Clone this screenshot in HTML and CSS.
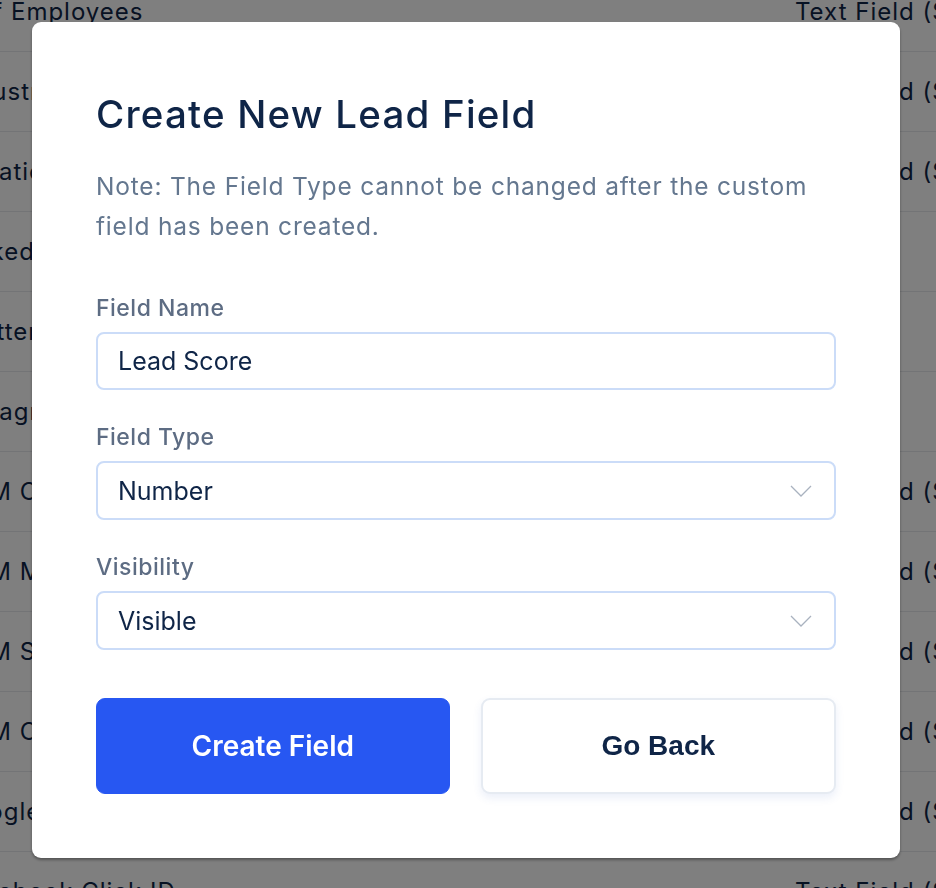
FILE: index.html
```html
<!DOCTYPE html>
<html>
<head>
<meta charset="utf-8">
<link rel="stylesheet" href="styles.css">
</head>
<body>
<div class="table">
  <div class="row"><span class="name"># of Employees</span><span class="type">Text Field (Single line)</span></div>
  <div class="row"><span class="name">Industry</span><span class="type">Text Field (Single line)</span></div>
  <div class="row"><span class="name">Location</span><span class="type">Text Field (Single line)</span></div>
  <div class="row"><span class="name">LinkedIn URL</span><span class="type">URL</span></div>
  <div class="row"><span class="name">Twitter Handle</span><span class="type">URL</span></div>
  <div class="row"><span class="name">Instagram</span><span class="type">URL</span></div>
  <div class="row"><span class="name">UTM Campaign</span><span class="type">Text Field (Single line)</span></div>
  <div class="row"><span class="name">UTM Medium</span><span class="type">Text Field (Single line)</span></div>
  <div class="row"><span class="name">UTM Source</span><span class="type">Text Field (Single line)</span></div>
  <div class="row"><span class="name">UTM Content</span><span class="type">Text Field (Single line)</span></div>
  <div class="row"><span class="name">Google Click ID</span><span class="type">Text Field (Single line)</span></div>
  <div class="row"><span class="name">Facebook Click ID</span><span class="type">Text Field (Single line)</span></div>
</div>
<div class="overlay"></div>
<div class="modal">
  <h1 class="title">Create New Lead Field</h1>
  <p class="note">Note: The Field Type cannot be changed after the custom field has been created.</p>
  <div class="field">
    <label class="label">Field Name</label>
    <div class="input">Lead Score</div>
  </div>
  <div class="field">
    <label class="label">Field Type</label>
    <div class="input select">Number
      <svg class="chev" width="22" height="12" viewBox="0 0 22 12"><polyline points="1,1 11,11 21,1" fill="none" stroke="#a9b2bf" stroke-width="1.3"/></svg>
    </div>
  </div>
  <div class="field">
    <label class="label">Visibility</label>
    <div class="input select">Visible
      <svg class="chev" width="22" height="12" viewBox="0 0 22 12"><polyline points="1,1 11,11 21,1" fill="none" stroke="#a9b2bf" stroke-width="1.3"/></svg>
    </div>
  </div>
  <div class="actions">
    <button class="btn primary">Create Field</button>
    <button class="btn secondary">Go Back</button>
  </div>
</div>
</body>
</html>
```
FILE: styles.css
```css
html, body {
  margin: 0;
  padding: 0;
  height: 100%;
  overflow: hidden;
  background: #ffffff;
  font-family: Inter, "Noto Sans", sans-serif;
}
.table {
  margin-top: -28px;
  margin-left: -46px;
  width: 1100px;
}
.row {
  display: grid;
  grid-template-columns: 841px 1fr;
  align-items: center;
  height: 79px;
  border-bottom: 1px solid #e6e8ec;
  font-size: 24px;
  letter-spacing: 1px;
  color: #0f2547;
  white-space: nowrap;
}
.overlay {
  position: fixed;
  inset: 0;
  background: rgba(0, 0, 0, 0.5);
}
.modal {
  position: fixed;
  left: 32px;
  top: 22px;
  width: 868px;
  height: 836px;
  box-sizing: border-box;
  background: #ffffff;
  border-radius: 9px;
  box-shadow: 0 2px 3px rgba(0, 0, 0, 0.35);
  padding: 66px 64px 0 64px;
  display: flex;
  flex-direction: column;
}
.title {
  margin: 0;
  font-size: 38.5px;
  font-weight: 500;
  line-height: 52px;
  letter-spacing: 1.2px;
  color: #0f2547;
}
.note {
  margin: 26px 0 0 0;
  font-size: 24.5px;
  line-height: 40px;
  color: #64778f;
  letter-spacing: 0.8px;
}
.field {
  display: flex;
  flex-direction: column;
  margin-top: 47px;
}
.field + .field {
  margin-top: 32px;
}
.label {
  font-size: 23px;
  line-height: 30px;
  color: #5d6c83;
  font-weight: 500;
  letter-spacing: 0.5px;
  margin-bottom: 9px;
}
.input {
  height: 58px;
  box-sizing: border-box;
  border: 2px solid #cbdcf8;
  border-radius: 8px;
  padding: 0 20px;
  display: flex;
  align-items: center;
  justify-content: space-between;
  font-size: 25px;
  color: #0f2547;
}
.select {
  height: 59px;
}
.chev {
  margin-right: 2px;
}
.actions {
  display: flex;
  gap: 31px;
  margin-top: 48px;
}
.btn {
  flex: 1;
  height: 96px;
  border-radius: 9px;
  font-size: 28px;
  cursor: pointer;
}
.primary {
  background: #2757f2;
  border: 1px solid #2757f2;
  color: #ffffff;
  font-family: Inter, sans-serif;
  font-weight: 600;
}
.secondary {
  background: #ffffff;
  border: 2px solid #e6ebf2;
  color: #0f2547;
  font-family: "Liberation Sans", Arial, sans-serif;
  font-weight: 700;
  box-shadow: 0 4px 8px rgba(60, 100, 200, 0.10);
}
```
